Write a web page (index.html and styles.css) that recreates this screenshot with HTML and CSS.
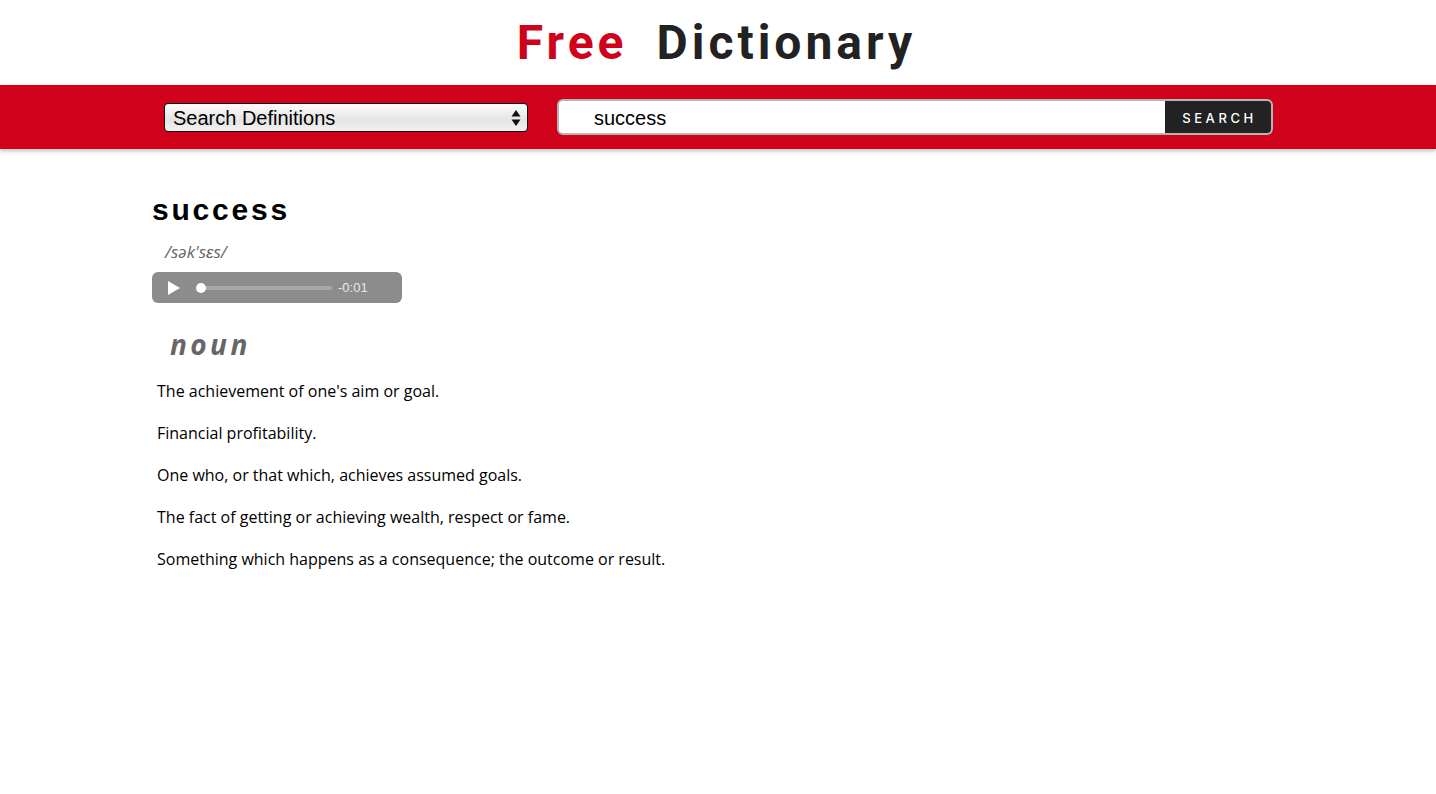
FILE: index.html
```html
<!DOCTYPE html>
<html lang="en">
<head>
<meta charset="utf-8">
<title>Free Dictionary</title>
<link rel="stylesheet" href="styles.css">
</head>
<body>
<header class="top">
  <h1 class="brand"><span class="brand-red">Free</span><span class="brand-dark">Dictionary</span></h1>
</header>
<nav class="bar">
  <div class="select">
    <span class="select-label">Search Definitions</span>
    <svg class="select-arrows" width="10" height="18" viewBox="0 0 10 18"><path d="M5 1 L9.5 7.5 H0.5 Z M5 17 L9.5 10.5 H0.5 Z" fill="#111"/></svg>
  </div>
  <div class="search">
    <span class="search-text">success</span>
    <span class="search-btn">SEARCH</span>
  </div>
</nav>
<main class="content">
  <h2 class="word">success</h2>
  <p class="phonetic">/sək'sɛs/</p>
  <div class="player">
    <svg class="play" width="12" height="14" viewBox="0 0 12 14"><path d="M0 0 L12 7 L0 14 Z" fill="#fff"/></svg>
    <div class="track"><span class="knob"></span></div>
    <span class="time">-0:01</span>
  </div>
  <h3 class="pos">noun</h3>
  <ul class="defs">
    <li>The achievement of one's aim or goal.</li>
    <li>Financial profitability.</li>
    <li>One who, or that which, achieves assumed goals.</li>
    <li>The fact of getting or achieving wealth, respect or fame.</li>
    <li>Something which happens as a consequence; the outcome or result.</li>
  </ul>
</main>
</body>
</html>
```
FILE: styles.css
```css
* { box-sizing: border-box; }
html, body { margin: 0; padding: 0; background: #fff; }
body { font-family: "Liberation Sans", Arial, sans-serif; }

.top {
  height: 85px;
  display: flex;
  justify-content: center;
  align-items: center;
}
.brand {
  margin: 0;
  font-family: Roboto, sans-serif;
  font-weight: 700;
  font-size: 48px;
  letter-spacing: 4px;
  display: flex;
  gap: 29px;
  padding-right: 3px;
}
.brand-red { color: #d0021b; }
.brand-dark { color: #222; }

.bar {
  height: 64px;
  background: #d0021b;
  box-shadow: 0 2px 4px rgba(0,0,0,0.25);
  display: flex;
  align-items: center;
  padding-left: 164px;
  gap: 29px;
}
.select {
  width: 364px;
  height: 29px;
  border: 1px solid #111;
  border-radius: 4px;
  background: linear-gradient(#fcfcfc, #e4e4e4 60%, #f2f2f2);
  display: flex;
  align-items: center;
  justify-content: space-between;
  padding: 2px 6px 0 8px;
}
.select-label { font-size: 20px; color: #000; }
.search {
  width: 716px;
  height: 36px;
  border: 2px solid #b5b5b5;
  border-radius: 6px;
  background: #fff;
  display: flex;
  align-items: stretch;
  overflow: hidden;
}
.search-text {
  flex: 1;
  font-size: 20px;
  padding: 2px 0 0 35px;
  display: flex;
  align-items: center;
  color: #000;
}
.search-btn {
  width: 106px;
  background: #222;
  color: #fff;
  font-family: Inter, sans-serif;
  font-weight: 500;
  font-size: 13px;
  letter-spacing: 3.6px;
  display: flex;
  align-items: center;
  justify-content: center;
  padding: 1px 0 0 3px;
}

.content { padding: 0 0 0 152px; }
.word {
  margin: 43px 0 0;
  font-size: 30px;
  font-weight: 700;
  letter-spacing: 2.8px;
  line-height: 36px;
  color: #000;
}
.phonetic {
  margin: 13px 0 0 13px;
  font-family: "Open Sans", sans-serif;
  font-style: italic;
  font-size: 17px;
  color: #666;
  line-height: 22px;
}
.player {
  margin-top: 9px;
  width: 250px;
  height: 31px;
  border-radius: 6px;
  background: #8c8c8c;
  display: flex;
  align-items: center;
  padding-left: 16px;
}
.play { flex: none; }
.track {
  margin-left: 16px;
  width: 136px;
  height: 4px;
  border-radius: 2px;
  background: #a9a9a9;
  position: relative;
}
.knob {
  position: absolute;
  left: 0;
  top: -3px;
  width: 10px;
  height: 10px;
  border-radius: 50%;
  background: #fff;
}
.time {
  margin-left: 6px;
  font-size: 13px;
  color: #e8e8e8;
}
.pos {
  margin: 23px 0 0 18px;
  font-family: "Open Sans", sans-serif;
  font-style: italic;
  font-weight: 700;
  font-size: 28px;
  letter-spacing: 3.4px;
  line-height: 36px;
  color: #666;
}
.defs {
  list-style: none;
  margin: 18px 0 0 5px;
  padding: 0;
  font-family: "Open Sans", sans-serif;
  font-size: 16px;
  color: #000;
}
.defs li { line-height: 22px; margin-bottom: 20px; }
```
